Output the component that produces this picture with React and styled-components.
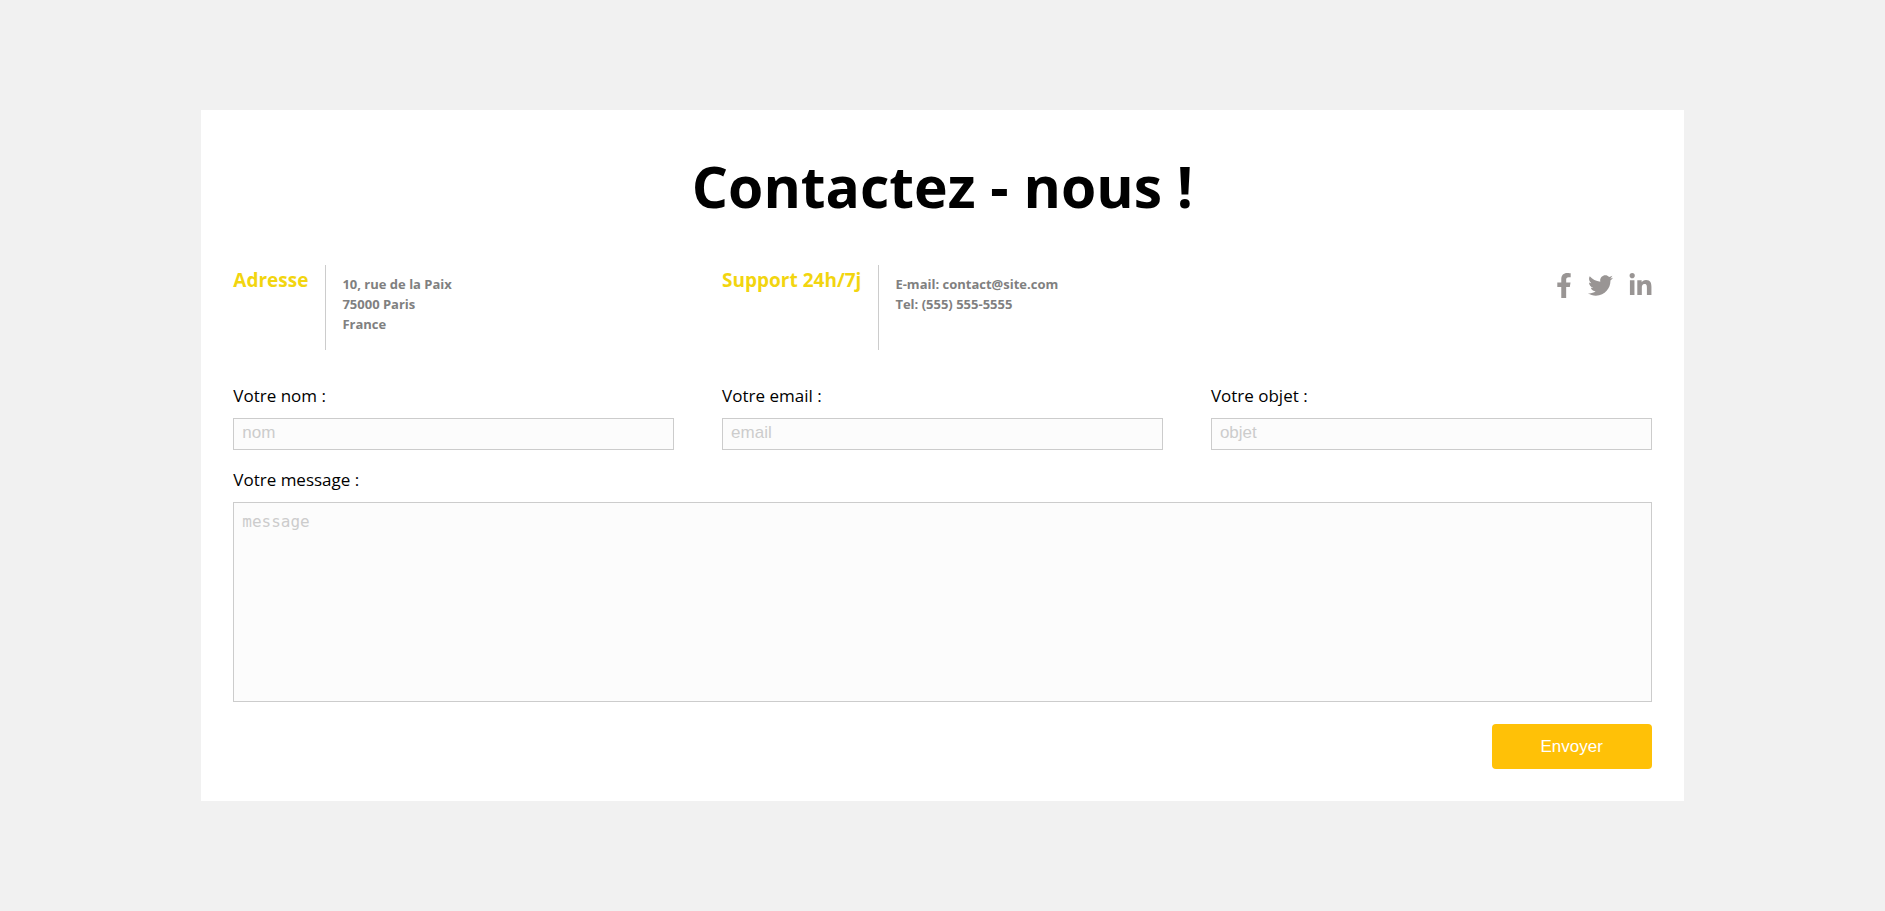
import React from "react";
import styled, { createGlobalStyle } from "styled-components";
import { FaFacebookF, FaTwitter, FaLinkedinIn } from "react-icons/fa";

const GlobalStyle = createGlobalStyle`
  *, *::before, *::after { box-sizing: border-box; }
  body {
    margin: 0;
    background: #f1f1f1;
    color: #000;
    font-family: "Open Sans", sans-serif;
    font-size: 17px;
  }
`;

const Page = styled.main`
  min-height: 100vh;
  padding: 16px;
  display: flex;
  align-items: center;
  justify-content: center;
`;

const Card = styled.section`
  width: 80%;
  padding: 32px;
  background: #fff;
`;

const Title = styled.h1`
  margin: 0 0 41px;
  padding-top: 6px;
  font-size: 57px;
  font-weight: 700;
  line-height: 76px;
  text-align: center;
`;

const Columns = styled.div`
  display: grid;
  grid-template-columns: repeat(3, 1fr);
  column-gap: 48px;
`;

const Infos = styled(Columns)`
  margin-bottom: 32px;
`;

const Info = styled.div`
  display: flex;
  min-height: 85px;
`;

const InfoTitle = styled.h2`
  margin: 0;
  padding: 2px 17px 0 0;
  border-right: 1px solid #ccc;
  color: #f2d50f;
  font-size: 19px;
  font-weight: 700;
  line-height: 27px;
  white-space: nowrap;
`;

const InfoText = styled.p`
  margin: 0;
  padding: 9px 0 0 16px;
  color: #808080;
  font-size: 13px;
  font-weight: 700;
  line-height: 20px;
`;

const Socials = styled.nav`
  display: flex;
  justify-content: flex-end;
  gap: 16px;
  padding-top: 8px;
`;

const SocialLink = styled.a`
  display: block;
  width: ${({ $width }) => $width}px;
  height: 25px;
  color: #999594;

  svg {
    display: block;
    width: 100%;
    height: 100%;
  }
`;

const Field = styled.div`
  display: flex;
  flex-direction: column;
  margin-bottom: 16px;
`;

const Label = styled.label`
  margin-bottom: 8px;
  font-size: 17px;
  line-height: 28px;
`;

const Input = styled.input`
  width: 100%;
  height: 32px;
  padding: 0 8px 2px;
  border: 1px solid #ccc;
  border-radius: 0;
  background: #fcfcfc;
  font-family: "Liberation Sans", Arial, sans-serif;
  font-size: 17px;
  &::placeholder { color: #ccc; opacity: 1; }
`;

const TextArea = styled.textarea`
  width: 100%;
  height: 200px;
  padding: 9px 8px;
  border: 1px solid #ccc;
  border-radius: 0;
  background: #fcfcfc;
  resize: none;
  font-family: "DejaVu Sans Mono", monospace;
  font-size: 16px;
  &::placeholder { color: #ccc; opacity: 1; }
`;

const Actions = styled.div`
  display: flex;
  justify-content: flex-end;
  padding-top: 6px;
`;

const Submit = styled.button`
  width: 160px;
  height: 45px;
  border: 0;
  border-radius: 4px;
  background: #ffc107;
  color: #fff;
  font-family: "Liberation Sans", Arial, sans-serif;
  font-size: 17px;
  cursor: pointer;
`;

const fields = [
  { id: "nom", label: "Votre nom :", type: "text" },
  { id: "email", label: "Votre email :", type: "email" },
  { id: "objet", label: "Votre objet :", type: "text" },
];

const socials = [
  { name: "Facebook", Icon: FaFacebookF, width: 16 },
  { name: "Twitter", Icon: FaTwitter, width: 25 },
  { name: "LinkedIn", Icon: FaLinkedinIn, width: 23 },
];

export default function App() {
  return (
    <Page>
      <GlobalStyle />
      <Card>
        <Title>Contactez - nous !</Title>
        <Infos>
          <Info>
            <InfoTitle>Adresse</InfoTitle>
            <InfoText>
              10, rue de la Paix<br />75000 Paris<br />France
            </InfoText>
          </Info>
          <Info>
            <InfoTitle>Support 24h/7j</InfoTitle>
            <InfoText>
              E-mail: contact@site.com<br />Tel: (555) 555-5555
            </InfoText>
          </Info>
          <Socials>
            {socials.map(({ name, Icon, width }) => (
              <SocialLink key={name} href="#" aria-label={name} $width={width}><Icon /></SocialLink>
            ))}
          </Socials>
        </Infos>
        <form>
          <Columns>
            {fields.map(({ id, label, type }) => (
              <Field key={id}>
                <Label htmlFor={id}>{label}</Label>
                <Input id={id} type={type} placeholder={id} />
              </Field>
            ))}
          </Columns>
          <Field>
            <Label htmlFor="message">Votre message :</Label>
            <TextArea id="message" placeholder="message" />
          </Field>
          <Actions>
            <Submit type="submit">Envoyer</Submit>
          </Actions>
        </form>
      </Card>
    </Page>
  );
}
